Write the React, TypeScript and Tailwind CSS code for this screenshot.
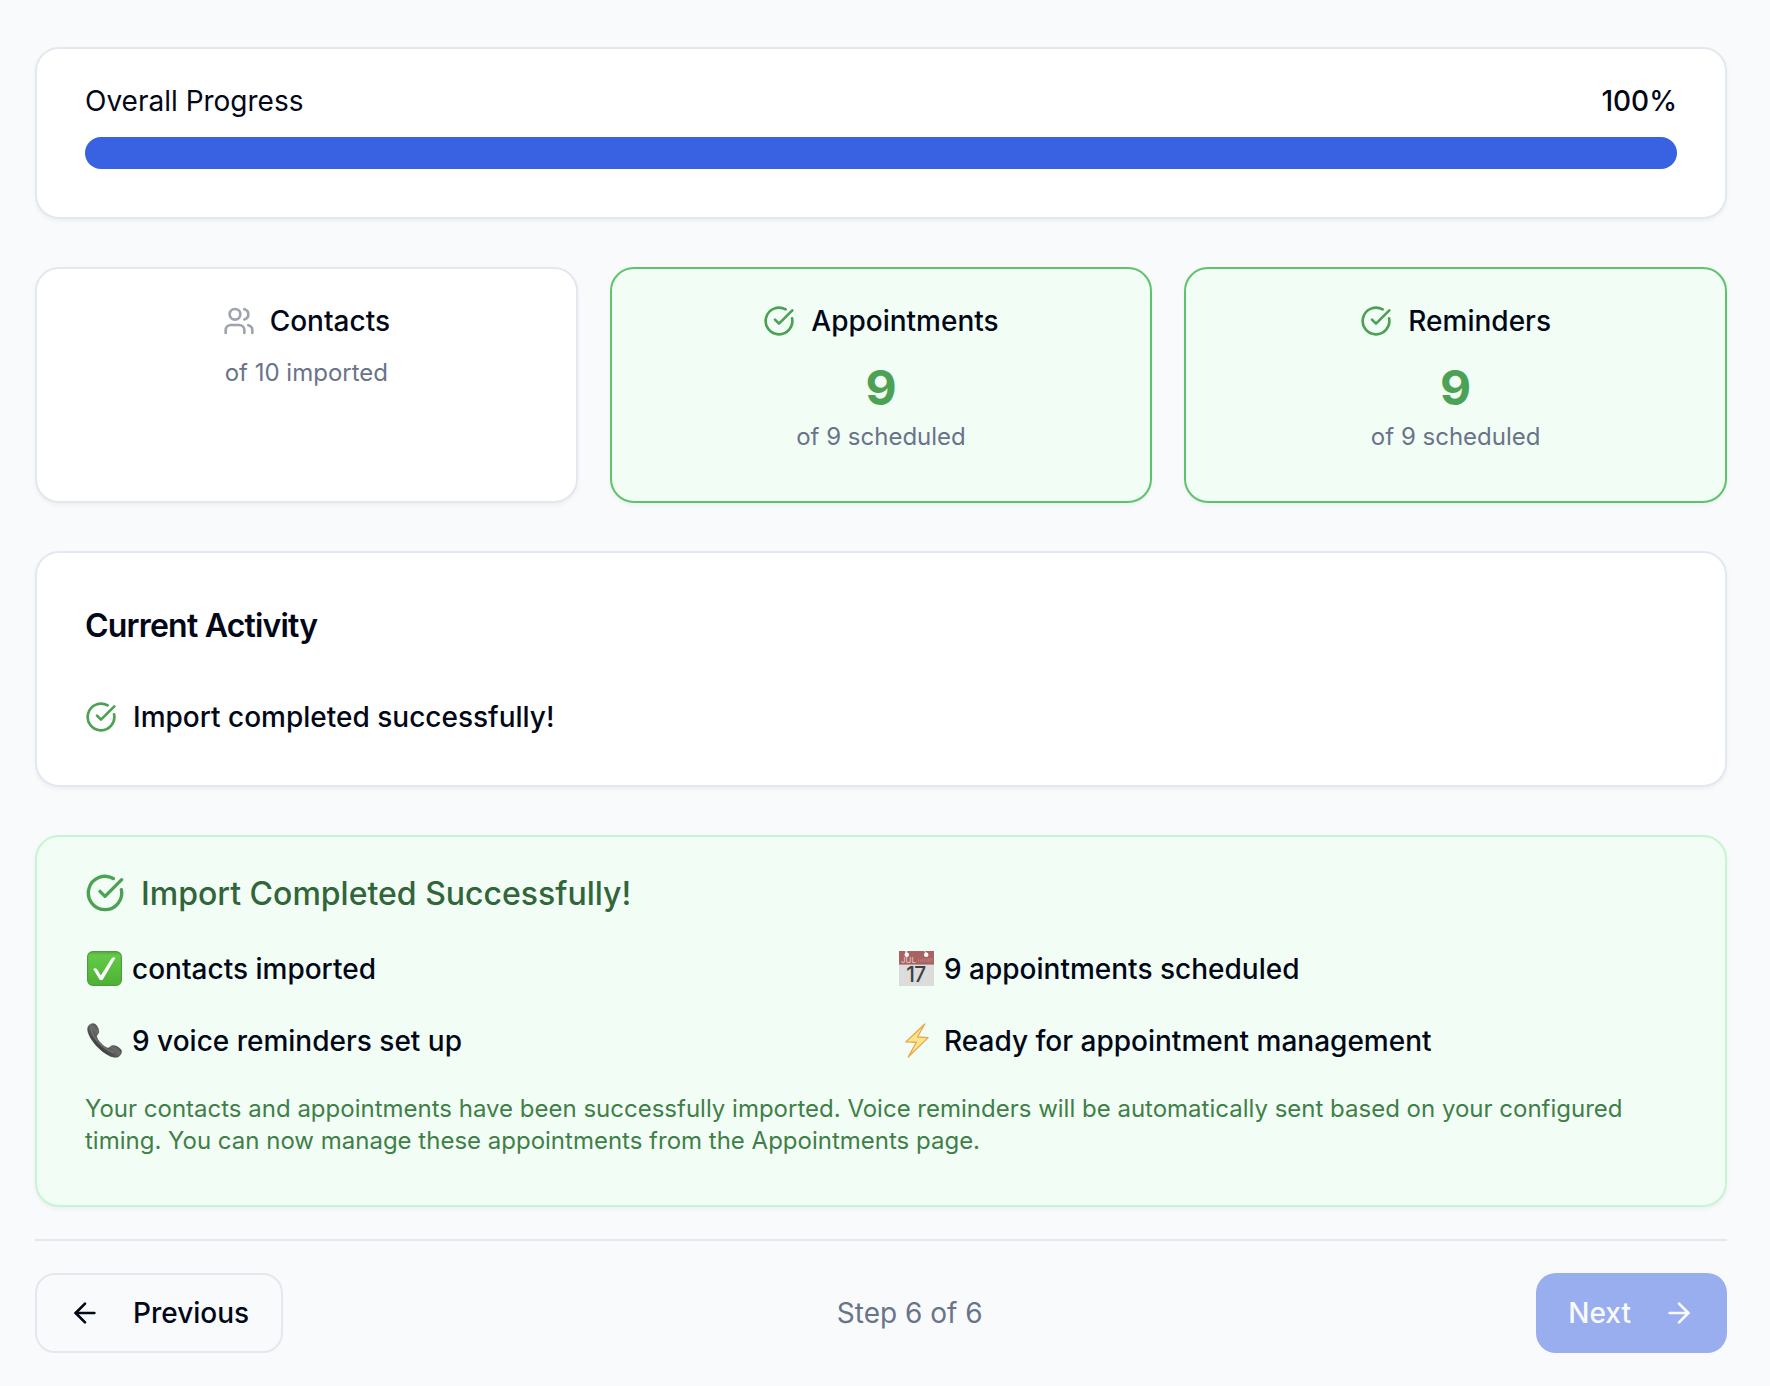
import React from "react";
import { ArrowLeft, ArrowRight, CircleCheckBig, Users } from "lucide-react";

const card = "rounded-[24px] border-2 shadow-[0_2px_4px_rgba(0,0,0,0.05)]";
const emoji = "-mt-0.5 size-[35px] shrink-0";
const summaryItem = "flex items-center gap-[10px] pl-[2px]";

function CheckEmoji() {
  return (
    <svg viewBox="0 0 36 36" className={emoji}>
      <defs>
        <linearGradient id="checkFill" x1="0" y1="0" x2="0" y2="1">
          <stop offset="0" stopColor="#5fa84b" />
          <stop offset="0.12" stopColor="#62cb46" />
          <stop offset="1" stopColor="#4fb035" />
        </linearGradient>
      </defs>
      <rect x="0.6" y="0.6" width="34.8" height="34.8" rx="5.5" fill="url(#checkFill)" stroke="#4d9e3a" strokeWidth="1.2" />
      <path d="M6.4 18.4c1.9-1.5 3.700-.7 4.700 1.300l3.100 5.600L25 8c1-1.500 2.200-1.700 4.300-1L16.800 28.600c-1.200 2-3.300 2-4.400 0z" fill="#fff" />
    </svg>
  );
}

function PhoneEmoji() {
  return (
    <svg viewBox="0 0 36 36" className={emoji}>
      <defs>
        <linearGradient id="phoneFill" x1="0" y1="1" x2="1" y2="0">
          <stop offset="0.3" stopColor="#3c3c3c" />
          <stop offset="0.52" stopColor="#6c6c6c" />
          <stop offset="0.7" stopColor="#3e3e3e" />
        </linearGradient>
      </defs>
      <path
        d="M2 2.600C4 .4 7.400 0 9.300 2c1.700 1.800 2.900 4.800 2.800 7.200-.1 2.300-2.300 2.700-2.200 4.600.2 3.600 7.600 11.200 11.400 12 1.900.4 2.400-2.300 4.800-2.500 2.900-.3 6.400 1.600 8.500 3.700 1.700 1.800.9 4.700-1 6.600-2.300 2.300-6.800 1.800-10.600 0C13.500 29 4.500 19 1.500 10.500.5 7.500.2 4.600 2 2.600z"
        fill="url(#phoneFill)"
        stroke="#444"
        strokeWidth="0.6"
      />
      <path d="M4 5c.5 8.500 11.500 21.500 23 25" fill="none" stroke="#838383" strokeWidth="1.2" strokeLinecap="round" opacity="0.7" />
    </svg>
  );
}

function CalendarEmoji() {
  return (
    <svg viewBox="0 0 36 36" className={emoji}>
      <rect width="36" height="36" fill="#dcdcdc" />
      <rect width="36" height="14" fill="#a96262" />
      <path d="M7 0h1v3h-1zM26 0l3 3" stroke="#fff" strokeWidth="1" />
      <circle cx="8" cy="3.800" r="2.300" fill="#fff" />
      <circle cx="28" cy="3.800" r="2.300" fill="#fff" />
      <path d="M20 11.500v-3M22 11.500v-3M24 11.500V8M26 11.500V8M28 11.500V7.500M30 11.500v-4M32 11.500V7M34 11.500V7" stroke="#c28b8b" strokeWidth="0.7" />
      <text x="2" y="12.700" fontSize="8.200" fill="#dfc0c0" fontFamily="Inter, sans-serif">JUL</text>
      <text x="17.500" y="32.300" fontSize="21.500" textAnchor="middle" letterSpacing="-0.6" fill="#3f3f3f" fontFamily="Inter, sans-serif">17</text>
    </svg>
  );
}

function BoltEmoji() {
  return (
    <svg viewBox="0 0 36 36" className={emoji}>
      <path d="M26.500 1L7 19.500l10.800.3L9.500 35 30 15l-11-.6z" fill="#fde48c" stroke="#e9a64c" strokeWidth="1.300" strokeLinejoin="round" />
    </svg>
  );
}

function StatCard({ title, detail }: { title: string; detail: string }) {
  return (
    <div className={`${card} border-[#5fc26c] bg-[#f2fdf5] px-12 pt-8 pb-12`}>
      <div className="mb-4 flex items-center justify-center gap-4">
        <CircleCheckBig className="size-8 text-[#4ca154]" />
        <span className="font-medium">{title}</span>
      </div>
      <div className="mb-0.5 text-center text-[48px] leading-[62px] font-bold text-[#4ca154]">9</div>
      <div className="text-center text-[24px] leading-8 text-[#697489]">{detail}</div>
    </div>
  );
}

export default function App() {
  return (
    <div className="h-[1386px] bg-[#f9fafc] pt-[47px] pr-[43px] pl-[35px] font-['Inter',sans-serif] text-[28px] leading-10 text-[#020817] [font-optical-sizing:none]">
      <div className="flex flex-col gap-12">
        <div className={`${card} border-[#e3e8f0] bg-white px-12 pt-8 pb-12`}>
          <div className="mb-4 flex justify-between">
            <span>Overall Progress</span>
            <span className="font-medium">100%</span>
          </div>
          <div className="h-8 rounded-full bg-[#3962e3]" />
        </div>

        <div className="grid grid-cols-3 gap-8">
          <div className={`${card} border-[#e3e8f0] bg-white px-12 pt-8 pb-12`}>
            <div className="mb-4 flex items-center justify-center gap-[15px]">
              <Users className="size-8 text-[#9ea3ae]" />
              <span className="font-medium">Contacts</span>
            </div>
            <div className="text-center text-[24px] leading-8 text-[#697489]">of 10 imported</div>
          </div>
          <StatCard title="Appointments" detail="of 9 scheduled" />
          <StatCard title="Reminders" detail="of 9 scheduled" />
        </div>

        <div className={`${card} border-[#e3e8f0] bg-white p-12`}>
          <h3 className="mb-[47px] pt-px text-[32px] leading-[48px] font-semibold tracking-[-0.025em]">Current Activity</h3>
          <div className="flex items-center gap-4">
            <CircleCheckBig className="size-8 text-[#4ca154]" />
            <span className="font-medium">Import completed successfully!</span>
          </div>
        </div>

        <div className={`${card} border-[#c7f5d3] bg-[#f2fdf5] px-12 pt-8 pb-12`}>
          <div className="mb-8 flex h-12 items-center gap-4">
            <CircleCheckBig className="size-10 text-[#4ca154]" />
            <span className="pt-0.5 text-[32px] leading-[48px] font-medium text-[#31653a]">Import Completed Successfully!</span>
          </div>
          <div className="grid grid-cols-2 gap-8 font-medium">
            <div className={summaryItem}><CheckEmoji />contacts imported</div>
            <div className={summaryItem}><CalendarEmoji />9 appointments scheduled</div>
            <div className={summaryItem}><PhoneEmoji />9 voice reminders set up</div>
            <div className={summaryItem}><BoltEmoji />Ready for appointment management</div>
          </div>
          <p className="mt-8 text-[24px] leading-8 text-[#3f7f48]">
            Your contacts and appointments have been successfully imported. Voice reminders will be automatically sent based on your configured timing. You can now manage these appointments from the Appointments page.
          </p>
        </div>
      </div>

      <div className="mt-8 flex items-center justify-between border-t-2 border-[#e3e8f0] pt-8">
        <button className="flex h-20 items-center gap-8 rounded-[20px] border-2 border-[#e3e8f0] px-8 font-medium">
          <ArrowLeft className="size-8" />
          Previous
        </button>
        <span className="text-[#697489]">Step 6 of 6</span>
        <button className="flex h-20 items-center gap-8 rounded-[20px] bg-[#99aeef] px-8 font-medium text-[#f9fafe]">
          Next
          <ArrowRight className="size-8" />
        </button>
      </div>
    </div>
  );
}
